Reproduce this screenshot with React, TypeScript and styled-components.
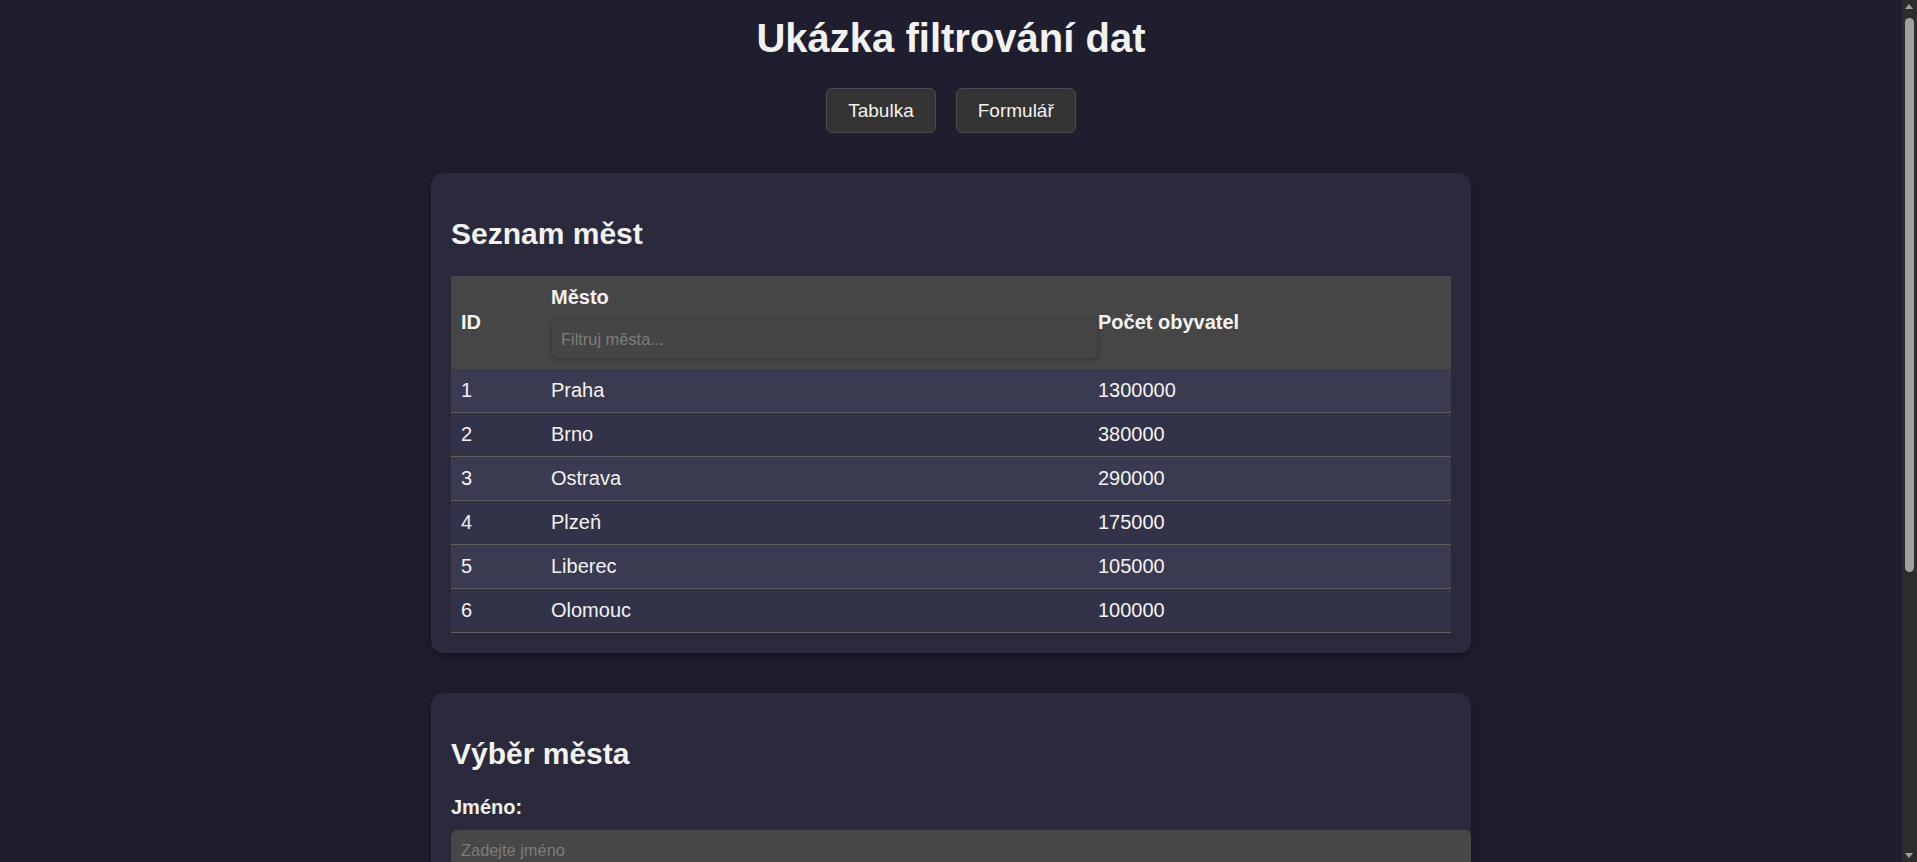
import React from "react";
import styled, { createGlobalStyle } from "styled-components";

const GlobalStyle = createGlobalStyle`
  :root { color-scheme: dark; }
  * { box-sizing: content-box; }
  body {
    margin: 0;
    background: #1e1e2e;
    color: #f2f2f2;
    font-family: "Liberation Sans", Arial, sans-serif;
  }
`;

const Page = styled.div`
  display: flex;
  flex-direction: column;
  align-items: center;
  padding: 15px 15px 40px 0;
`;

const ScrollTrack = styled.div`
  position: fixed;
  top: 0;
  right: 0;
  width: 15px;
  height: 100vh;
  background: #2c2c2c;
  z-index: 10;
`;

const ScrollThumb = styled.div`
  position: absolute;
  top: 18px;
  left: 3px;
  width: 9px;
  height: 554px;
  background: #9f9f9f;
  border-radius: 5px;
`;

const ScrollArrow = styled.div<{ $down?: boolean }>`
  position: absolute;
  left: 3px;
  width: 0;
  height: 0;
  border-left: 4.5px solid transparent;
  border-right: 4.5px solid transparent;
  ${(p) =>
    p.$down
      ? "bottom: 4px; border-top: 5px solid #9f9f9f;"
      : "top: 4px; border-bottom: 5px solid #9f9f9f;"}
`;

const Title = styled.h1`
  margin: 0;
  font-size: 40px;
  line-height: 46px;
  font-weight: 700;
`;

const Nav = styled.nav`
  display: flex;
  gap: 20px;
  margin-top: 27px;
`;

const NavButton = styled.button`
  font-family: inherit;
  font-size: 19px;
  line-height: 21px;
  padding: 11px 21px;
  color: #f2f2f2;
  background: #333333;
  border: 1px solid #4a4a4a;
  border-radius: 6px;
  cursor: pointer;
`;

const Card = styled.section`
  width: 1000px;
  padding: 20px;
  margin-top: 40px;
  background: #2b2a3c;
  border-radius: 12px;
  box-shadow: 0 4px 14px rgba(0, 0, 0, 0.35);
`;

const CardTitle = styled.h2`
  margin: 24px 0 25px;
  font-size: 30px;
  line-height: 34px;
  font-weight: 700;
`;

const Table = styled.table`
  width: 100%;
  border-collapse: collapse;
  table-layout: fixed;
`;

const HeadRow = styled.tr`
  background: #464646;
`;

const HeadCell = styled.th<{ $w?: number }>`
  ${(p) => (p.$w ? `width: ${p.$w}px;` : "")}
  padding: 10px;
  text-align: left;
  vertical-align: middle;
  font-size: 20px;
  line-height: 23px;
  font-weight: 700;
`;

const HeadLabel = styled.div`
  margin-bottom: 10px;
`;

const FilterInput = styled.input`
  position: relative;
  display: block;
  width: 100%;
  padding: 10px 9px;
  font-family: inherit;
  font-size: 16.4px;
  line-height: 18px;
  color: #f2f2f2;
  background: #454545;
  border: 1px solid #3f3f3f;
  border-radius: 6px;
  box-shadow: 0 1px 4px rgba(0, 0, 0, 0.25);
  outline: none;
  &::placeholder { color: #7c7c7c; }
`;

const Row = styled.tr<{ $odd: boolean }>`
  background: ${(p) => (p.$odd ? "#3a3a50" : "#323248")};
  border-bottom: 1px solid #5f5f5f;
`;

const Cell = styled.td`
  padding: 10px;
  font-size: 20px;
  line-height: 23px;
`;

const Field = styled.div`
  display: flex;
  flex-direction: column;
  align-items: flex-start;
  & + & { margin-top: 24px; }
`;

const Label = styled.label`
  font-size: 20px;
  line-height: 23px;
  font-weight: 700;
  margin-bottom: 11px;
`;

const TextInput = styled.input`
  width: 100%;
  padding: 10px 9px;
  font-family: inherit;
  font-size: 16.4px;
  line-height: 18px;
  color: #f2f2f2;
  background: #474747;
  border: 1px solid #474747;
  border-radius: 6px;
  outline: none;
  &::placeholder { color: #7c7c7c; }
`;

const Select = styled.select`
  width: 1020px;
  padding: 10px 9px;
  font-family: inherit;
  font-size: 16px;
  line-height: 18px;
  height: 40px;
  box-sizing: border-box;
  color: #f2f2f2;
  background: #474747;
  border: 1px solid #474747;
  border-radius: 6px;
`;

const TextArea = styled.textarea`
  width: 100%;
  height: 110px;
  padding: 10px 9px;
  font-family: inherit;
  font-size: 16px;
  color: #f2f2f2;
  background: #474747;
  border: 1px solid #474747;
  border-radius: 6px;
  resize: none;
  &::placeholder { color: #7c7c7c; }
`;

const SubmitButton = styled(NavButton)`
  margin-top: 24px;
`;

const cities = [
  { id: 1, name: "Praha", pop: 1300000 },
  { id: 2, name: "Brno", pop: 380000 },
  { id: 3, name: "Ostrava", pop: 290000 },
  { id: 4, name: "Plzeň", pop: 175000 },
  { id: 5, name: "Liberec", pop: 105000 },
  { id: 6, name: "Olomouc", pop: 100000 },
];

export default function App() {
  return (
    <>
      <GlobalStyle />
      <ScrollTrack aria-hidden>
        <ScrollArrow />
        <ScrollThumb />
        <ScrollArrow $down />
      </ScrollTrack>
      <Page>
        <Title>Ukázka filtrování dat</Title>
        <Nav>
          <NavButton>Tabulka</NavButton>
          <NavButton>Formulář</NavButton>
        </Nav>

        <Card>
          <CardTitle>Seznam měst</CardTitle>
          <Table>
            <thead>
              <HeadRow>
                <HeadCell $w={70}>ID</HeadCell>
                <HeadCell $w={527}>
                  <HeadLabel>Město</HeadLabel>
                  <FilterInput placeholder="Filtruj města..." />
                </HeadCell>
                <HeadCell>Počet obyvatel</HeadCell>
              </HeadRow>
            </thead>
            <tbody>
              {cities.map((c, i) => (
                <Row key={c.id} $odd={i % 2 === 0}>
                  <Cell>{c.id}</Cell>
                  <Cell>{c.name}</Cell>
                  <Cell>{c.pop}</Cell>
                </Row>
              ))}
            </tbody>
          </Table>
        </Card>

        <Card>
          <CardTitle>Výběr města</CardTitle>
          <Field>
            <Label>Jméno:</Label>
            <TextInput placeholder="Zadejte jméno" />
          </Field>
          <Field>
            <Label>Město:</Label>
            <Select defaultValue="">
              <option value="">Vyberte město</option>
              {cities.map((c) => (
                <option key={c.id} value={c.name}>
                  {c.name}
                </option>
              ))}
            </Select>
          </Field>
          <Field>
            <Label>Poznámka:</Label>
            <TextArea placeholder="Napište poznámku" />
          </Field>
          <SubmitButton>Odeslat</SubmitButton>
        </Card>
      </Page>
    </>
  );
}
